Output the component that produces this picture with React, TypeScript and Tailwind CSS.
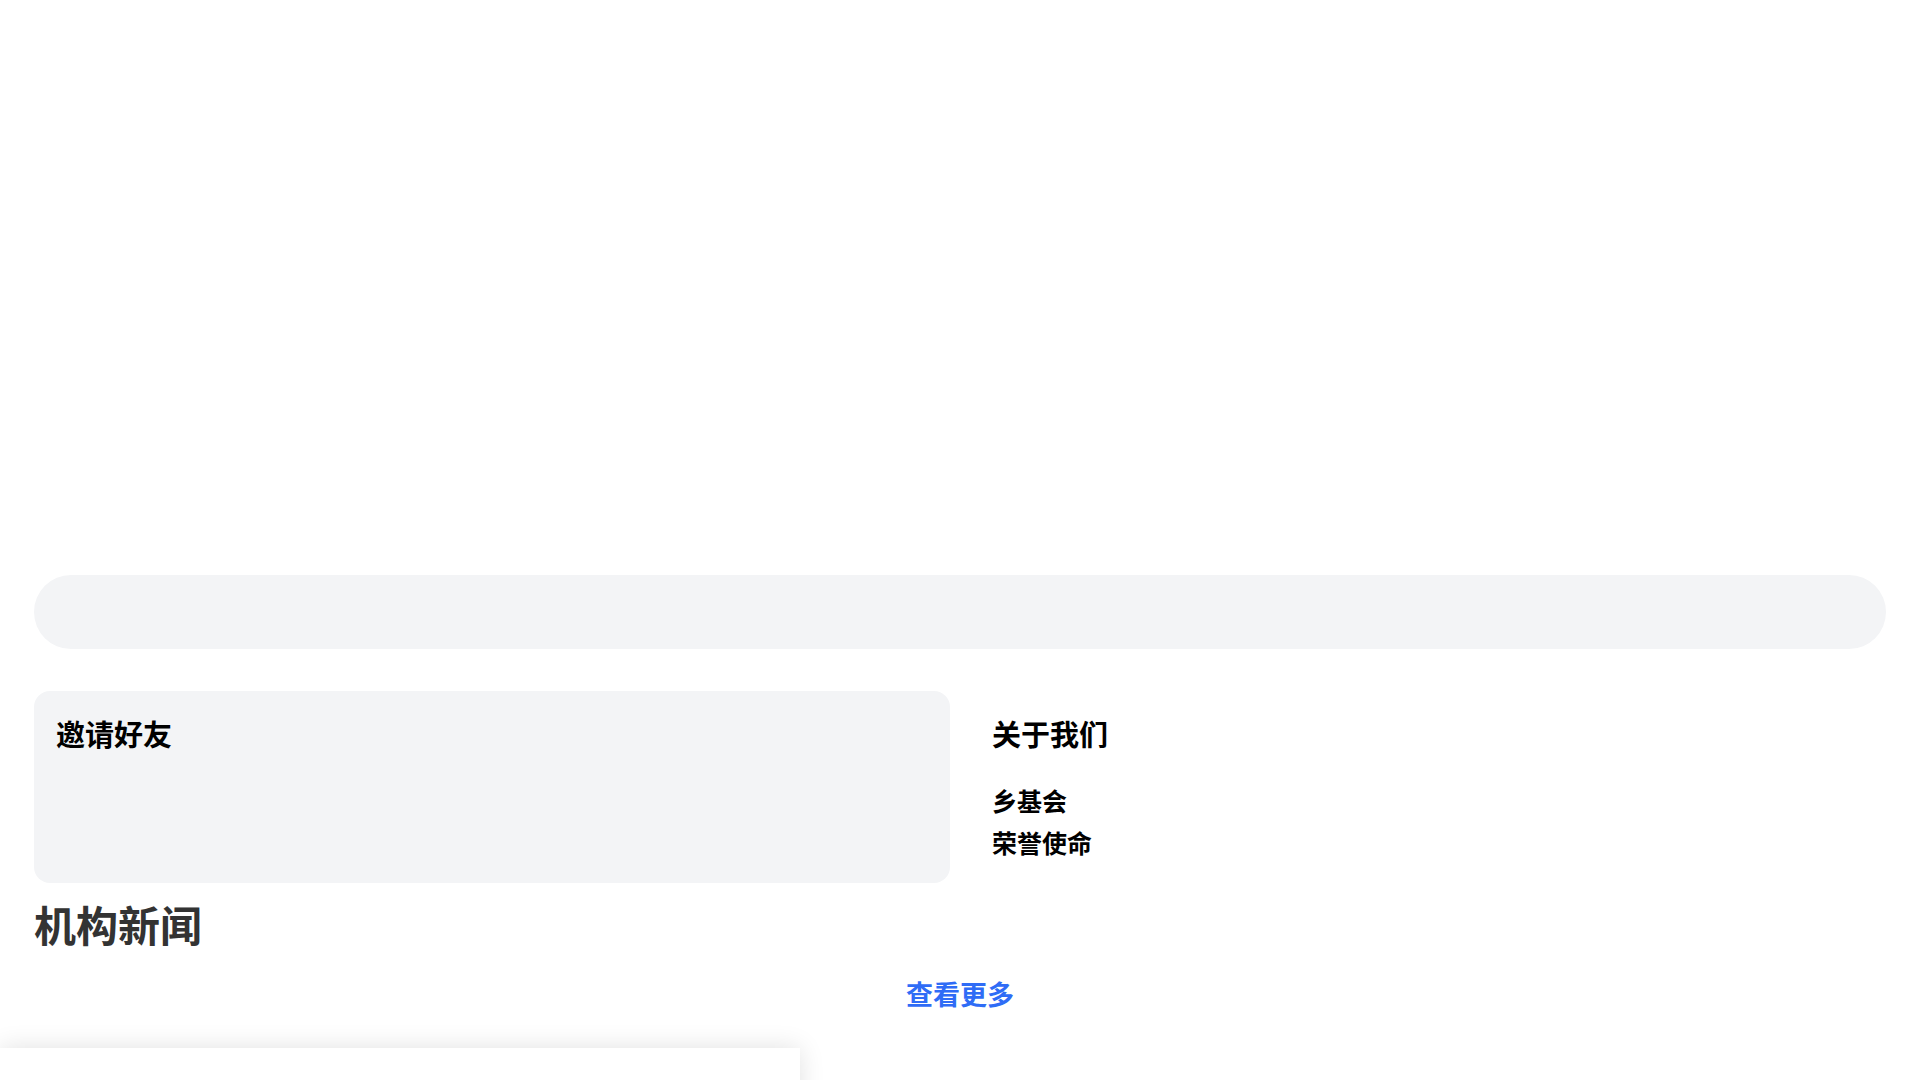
export default function App() {
  return (
    <div className="min-h-screen bg-white font-['Noto_Sans_CJK_SC','Noto_Sans',sans-serif] overflow-hidden">
      {/* banner area (empty) */}
      <div className="h-[575px]" />

      <div className="px-[34px]">
        {/* search bar */}
        <div className="h-[74px] rounded-full bg-gray-100" />

        <div className="mt-[42px] grid grid-cols-2 gap-5">
          <div className="h-[192px] rounded-2xl bg-gray-100 px-[22px] pt-[22px]">
            <div className="text-[29px] leading-[40px] font-bold text-black">邀请好友</div>
          </div>
          <div className="px-[22px] pt-[22px]">
            <div className="text-[29px] leading-[40px] font-bold text-black mb-[26px]">关于我们</div>
            <div className="text-[25px] leading-[42px] font-bold text-black">乡基会</div>
            <div className="text-[25px] leading-[42px] font-bold text-black">荣誉使命</div>
          </div>
        </div>

        <h2 className="mt-[13px] text-[42px] leading-[56px] font-bold text-[#333]">机构新闻</h2>

        <div className="mt-[22px] flex justify-center">
          <a className="text-[27px] leading-[40px] font-bold text-[#2f6cf6] cursor-pointer">查看更多</a>
        </div>
      </div>

      <div className="mt-[34px] w-[800px] h-[200px] bg-white shadow-[0_0_24px_rgba(0,0,0,0.12)]" />
    </div>
  );
}
